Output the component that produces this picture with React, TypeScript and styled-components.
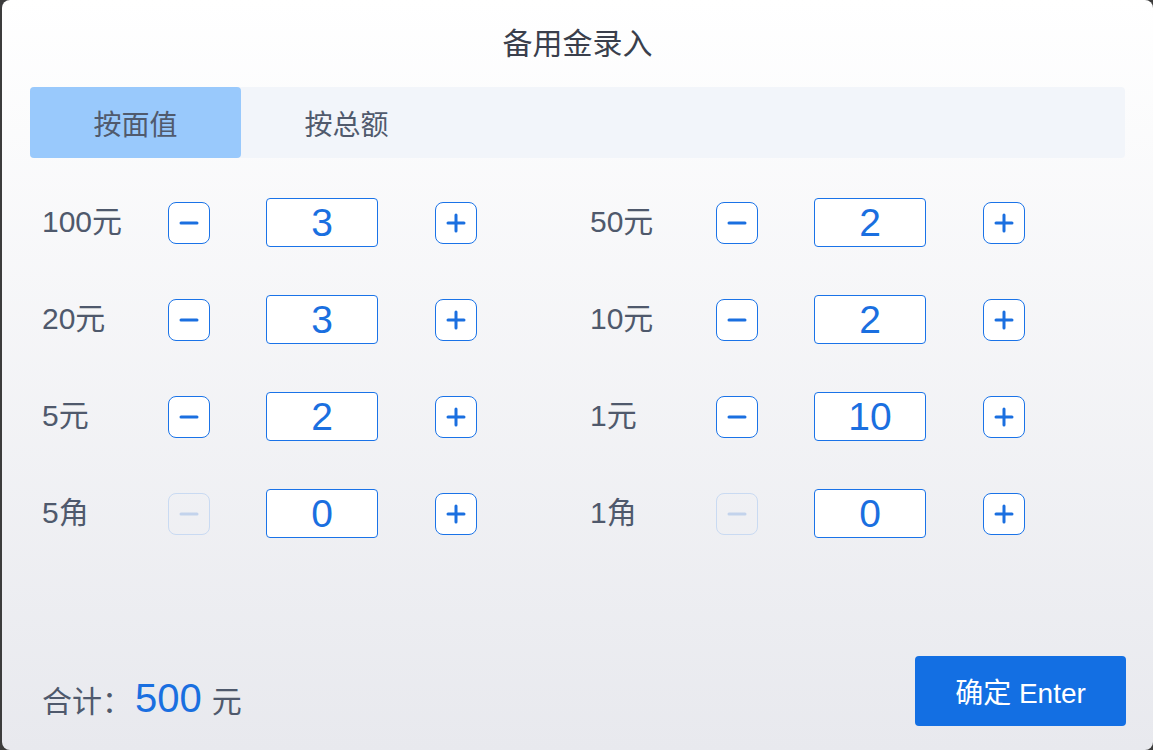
import React from 'react'
import styled, { createGlobalStyle } from 'styled-components'

const GlobalStyle = createGlobalStyle`
  html, body {
    margin: 0;
    padding: 0;
    background: #3c3c3c;
    overflow: hidden;
  }
  body {
    font-family: "Liberation Sans", "Noto Sans CJK SC", sans-serif;
  }
`

const Dialog = styled.div`
  margin-left: 2px;
  width: 1151px;
  height: 750px;
  border-radius: 8px;
  background: linear-gradient(180deg, #ffffff 0%, #e8e9ee 100%);
  display: flex;
  flex-direction: column;
  box-sizing: border-box;
`

const Title = styled.div`
  height: 87px;
  display: flex;
  align-items: center;
  justify-content: center;
  font-size: 30px;
  line-height: 1;
  color: #3a3f4c;
`

const TabBar = styled.div`
  margin: 0 28px;
  height: 71px;
  background: #f2f5fa;
  border-radius: 4px;
  display: flex;
`

const Tab = styled.div<{ $active?: boolean }>`
  width: 211px;
  display: flex;
  align-items: center;
  justify-content: center;
  font-size: 28px;
  color: #505a6d;
  border-radius: 4px;
  background: ${p => (p.$active ? '#99c9fc' : 'transparent')};
`

const Grid = styled.div`
  margin-top: 16px;
  padding-left: 40px;
  display: grid;
  grid-template-columns: 548px 548px;
  grid-auto-rows: 97px;
`

const Cell = styled.div`
  display: flex;
  align-items: center;
`

const Label = styled.div`
  width: 126px;
  font-size: 30px;
  line-height: 1;
  margin-top: -1px;
  color: #4f596c;
`

const StepButton = styled.div<{ $disabled?: boolean }>`
  width: 42px;
  height: 42px;
  box-sizing: border-box;
  border-radius: 8px;
  border: 1px solid ${p => (p.$disabled ? '#c9daf2' : '#1a73e8')};
  background: ${p => (p.$disabled ? 'transparent' : '#ffffff')};
  color: ${p => (p.$disabled ? '#c3d3ec' : '#1a6fe0')};
  display: flex;
  align-items: center;
  justify-content: center;
`

const CountBox = styled.div`
  width: 112px;
  height: 49px;
  box-sizing: border-box;
  margin: 0 57px 0 56px;
  border: 1px solid #1a73e8;
  border-radius: 4px;
  background: #fff;
  display: flex;
  align-items: center;
  justify-content: center;
  font-size: 39px;
  color: #1a6fe0;
`

const Footer = styled.div`
  margin-top: auto;
  padding: 0 27px 24px 40px;
  display: flex;
  justify-content: space-between;
  align-items: flex-end;
`

const Total = styled.div`
  font-size: 30px;
  color: #4f596c;
  padding-bottom: 5px;
  display: flex;
  align-items: baseline;
`

const Amount = styled.span`
  font-size: 40px;
  color: #1a6fe0;
  margin: 0 10px 0 3px;
`

const Confirm = styled.div`
  width: 211px;
  height: 70px;
  border-radius: 4px;
  background: #136fe3;
  color: #fff;
  font-size: 28px;
  display: flex;
  align-items: center;
  justify-content: center;
`

const Minus = () => (
  <svg width="20" height="20" viewBox="0 0 20 20">
    <path d="M2 10H18" stroke="currentColor" strokeWidth="3" strokeLinecap="round" />
  </svg>
)

const Plus = () => (
  <svg width="20" height="20" viewBox="0 0 20 20">
    <path d="M2 10H18M10 2V18" stroke="currentColor" strokeWidth="3" strokeLinecap="round" />
  </svg>
)

const notes = [
  { label: '100元', count: 3 },
  { label: '50元', count: 2 },
  { label: '20元', count: 3 },
  { label: '10元', count: 2 },
  { label: '5元', count: 2 },
  { label: '1元', count: 10 },
  { label: '5角', count: 0 },
  { label: '1角', count: 0 },
]

export default function App() {
  return (
    <>
      <GlobalStyle />
      <Dialog>
        <Title>备用金录入</Title>
        <TabBar>
          <Tab $active>按面值</Tab>
          <Tab>按总额</Tab>
        </TabBar>
        <Grid>
          {notes.map(n => (
            <Cell key={n.label}>
              <Label>{n.label}</Label>
              <StepButton $disabled={n.count === 0}>
                <Minus />
              </StepButton>
              <CountBox>{n.count}</CountBox>
              <StepButton>
                <Plus />
              </StepButton>
            </Cell>
          ))}
        </Grid>
        <Footer>
          <Total>
            合计：<Amount>500</Amount>元
          </Total>
          <Confirm>确定 Enter</Confirm>
        </Footer>
      </Dialog>
    </>
  )
}
